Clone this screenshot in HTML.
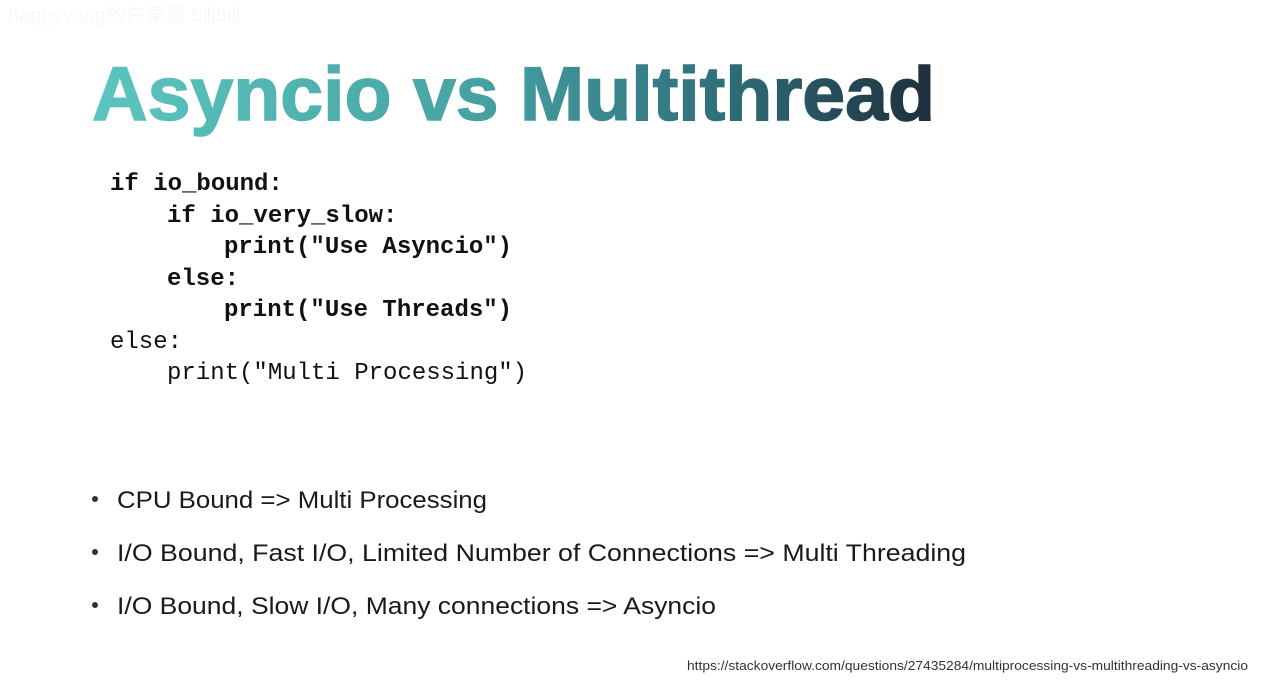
<!DOCTYPE html>
<html><head><meta charset="utf-8"><style>
html,body{margin:0;padding:0;background:#fff;width:1276px;height:694px;overflow:hidden}
svg{display:block}
</style></head><body>
<svg width="1276" height="694" viewBox="0 0 1276 694" xmlns="http://www.w3.org/2000/svg">
<defs>
<linearGradient id="g" x1="92" y1="0" x2="935" y2="0" gradientUnits="userSpaceOnUse">
<stop offset="0" stop-color="#5cc5bf"/>
<stop offset="0.45" stop-color="#47a3a3"/>
<stop offset="0.75" stop-color="#2f6f7a"/>
<stop offset="1" stop-color="#1e2d3b"/>
</linearGradient>
</defs>
<text x="8" y="22" font-family="Liberation Sans, 'Noto Sans CJK SC', sans-serif" font-size="20" fill="#f8f8f8">happyvang的白草屋 bilibili</text>
<text x="92" y="120" textLength="843" lengthAdjust="spacingAndGlyphs" font-family="Liberation Sans, sans-serif" font-weight="bold" font-size="76" fill="url(#g)" stroke="url(#g)" stroke-width="1.5">Asyncio vs Multithread</text>
<g font-family="Liberation Mono, monospace" font-size="24" fill="#111" xml:space="preserve">
<text x="110" y="190" font-weight="bold">if io_bound:</text>
<text x="167" y="222" font-weight="bold">if io_very_slow:</text>
<text x="224" y="253" font-weight="bold">print("Use Asyncio")</text>
<text x="167" y="285" font-weight="bold">else:</text>
<text x="224" y="316" font-weight="bold">print("Use Threads")</text>
<text x="110" y="348">else:</text>
<text x="167" y="379">print("Multi Processing")</text>
</g>
<g font-family="Liberation Sans, sans-serif" font-size="24" fill="#1a1a1a">
<circle cx="95" cy="499" r="3" fill="#333"/>
<circle cx="95" cy="552" r="3" fill="#333"/>
<circle cx="95" cy="605" r="3" fill="#333"/>
<text x="117" y="508" textLength="370" lengthAdjust="spacingAndGlyphs">CPU Bound =&gt; Multi Processing</text>
<text x="117" y="561" textLength="849" lengthAdjust="spacingAndGlyphs">I/O Bound, Fast I/O, Limited Number of Connections =&gt; Multi Threading</text>
<text x="117" y="614" textLength="599" lengthAdjust="spacingAndGlyphs">I/O Bound, Slow I/O, Many connections =&gt; Asyncio</text>
</g>
<text x="687" y="670" textLength="561" lengthAdjust="spacingAndGlyphs" font-family="Liberation Sans, sans-serif" font-size="13" fill="#333">https://stackoverflow.com/questions/27435284/multiprocessing-vs-multithreading-vs-asyncio</text>
</svg>
</body></html>
